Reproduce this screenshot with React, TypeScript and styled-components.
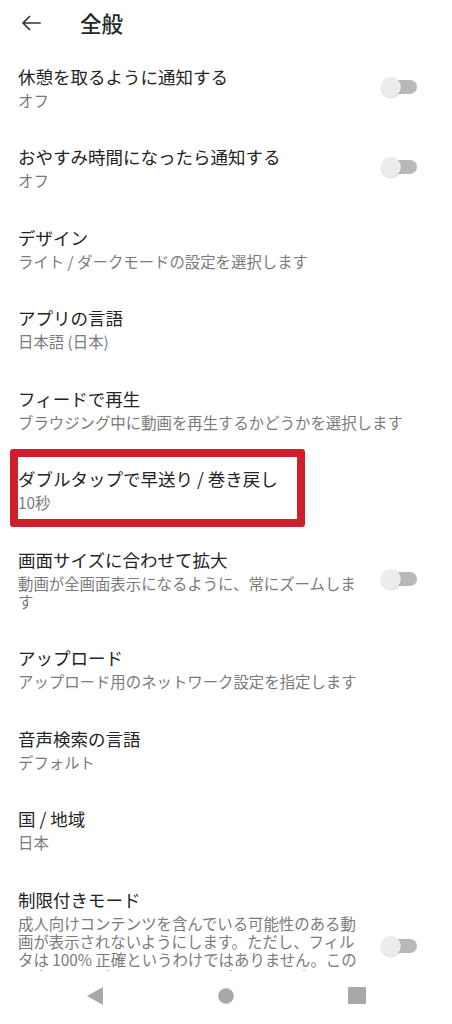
import React from "react";
import styled, { createGlobalStyle } from "styled-components";

const GlobalStyle = createGlobalStyle`
  html, body {
    margin: 0;
    padding: 0;
    background: #fff;
  }
  body {
    font-family: "Noto Sans CJK JP", "Noto Sans", Roboto, sans-serif;
    color: #222;
  }
`;

const Screen = styled.div`
  width: 452px;
  height: 1024px;
  display: flex;
  flex-direction: column;
  overflow: hidden;
  background: #fff;
`;

const Header = styled.div`
  height: 46px;
  flex: none;
  display: flex;
  align-items: center;
  padding-left: 21px;
  gap: 39px;
  .title {
    font-size: 21.5px;
    font-weight: 500;
    color: #262626;
    line-height: 1;
    margin-top: -1px;
  }
`;

const List = styled.div`
  flex: 1;
  overflow: hidden;
`;

const Item = styled.div<{ $highlight?: boolean }>`
  position: relative;
  display: flex;
  align-items: center;
  padding: 18.5px 35px 18px 18px;
  &::after {
    content: "";
    display: ${(p) => (p.$highlight ? "block" : "none")};
    position: absolute;
    left: 10px;
    top: 0;
    width: 295px;
    height: 78px;
    box-sizing: border-box;
    border: 8px solid #cf1f2c;
    border-radius: 3px;
  }
`;

const Texts = styled.div<{ $narrow?: boolean }>`
  flex: ${(p) => (p.$narrow ? "none" : "1")};
  width: ${(p) => (p.$narrow ? "348px" : "auto")};
  .name {
    font-size: 17.5px;
    line-height: 24px;
    color: #242424;
  }
  .desc {
    margin-top: 2px;
    font-size: 15.4px;
    line-height: 18px;
    color: #7b7b7b;
  }
`;

const Toggle = styled.div`
  margin-left: auto;
  position: relative;
  width: 34px;
  height: 20px;
  flex: none;
  &::before {
    content: "";
    position: absolute;
    right: 0;
    top: 3px;
    width: 30px;
    height: 14px;
    border-radius: 7px;
    background: #b8b8b8;
  }
  &::after {
    content: "";
    position: absolute;
    left: -2px;
    top: 0;
    width: 20px;
    height: 20px;
    border-radius: 50%;
    background: #ececec;
    box-shadow: 0 1px 2px rgba(0, 0, 0, 0.18);
  }
`;

const NavBar = styled.div`
  height: 49px;
  flex: none;
  background: #fff;
  display: flex;
  align-items: center;
  justify-content: space-between;
  padding: 0 86px 4px 87px;
  svg {
    display: block;
  }
`;

type Setting = {
  name: string;
  desc: string;
  toggle?: boolean;
  highlight?: boolean;
};

const settings: Setting[] = [
  { name: "休憩を取るように通知する", desc: "オフ", toggle: true },
  { name: "おやすみ時間になったら通知する", desc: "オフ", toggle: true },
  { name: "デザイン", desc: "ライト / ダークモードの設定を選択します" },
  { name: "アプリの言語", desc: "日本語 (日本)" },
  { name: "フィードで再生", desc: "ブラウジング中に動画を再生するかどうかを選択します" },
  { name: "ダブルタップで早送り / 巻き戻し", desc: "10秒", highlight: true },
  {
    name: "画面サイズに合わせて拡大",
    desc: "動画が全画面表示になるように、常にズームします",
    toggle: true,
  },
  { name: "アップロード", desc: "アップロード用のネットワーク設定を指定します" },
  { name: "音声検索の言語", desc: "デフォルト" },
  { name: "国 / 地域", desc: "日本" },
  {
    name: "制限付きモード",
    desc:
      "成人向けコンテンツを含んでいる可能性のある動画が表示されないようにします。ただし、フィルタは 100% 正確というわけではありません。この設定はこのデバイスのこのアプリにのみ適用されます。",
    toggle: true,
  },
];

function BackArrow() {
  return (
    <svg width="20" height="16" viewBox="0 0 20 16" fill="none">
      <path
        d="M19 8H2M8.5 1.5L2 8l6.5 6.5"
        stroke="#333"
        strokeWidth="1.7"
        strokeLinecap="round"
        strokeLinejoin="round"
      />
    </svg>
  );
}

function App() {
  return (
    <Screen>
      <GlobalStyle />
      <Header>
        <BackArrow />
        <div className="title">全般</div>
      </Header>
      <List>
        {settings.map((s) => (
          <Item key={s.name} $highlight={s.highlight}>
            <Texts $narrow={s.toggle}>
              <div className="name">{s.name}</div>
              <div className="desc">{s.desc}</div>
            </Texts>
            {s.toggle && <Toggle />}
          </Item>
        ))}
      </List>
      <NavBar>
        <svg width="16" height="18" viewBox="0 0 16 18">
          <path d="M16 0v18L0 9z" fill="#a9a9a9" />
        </svg>
        <svg width="16" height="16" viewBox="0 0 16 16">
          <circle cx="8" cy="8" r="7.8" fill="#a9a9a9" />
        </svg>
        <svg width="18" height="17" viewBox="0 0 18 17">
          <rect width="18" height="17" rx="1" fill="#a9a9a9" />
        </svg>
      </NavBar>
    </Screen>
  );
}

export default App;
